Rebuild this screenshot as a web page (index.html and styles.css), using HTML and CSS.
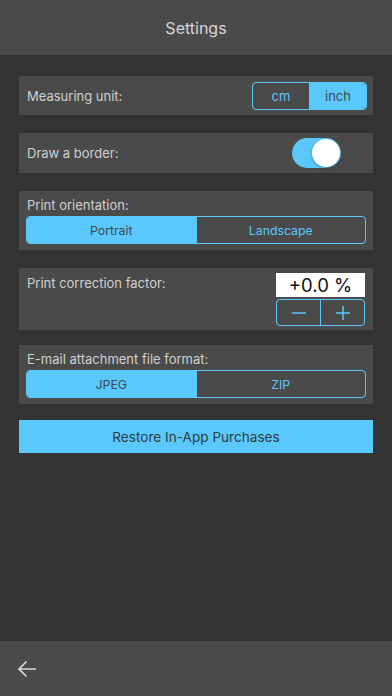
FILE: index.html
```html
<!DOCTYPE html>
<html>
<head>
<meta charset="utf-8">
<link rel="stylesheet" href="styles.css">
</head>
<body>
<div class="app">
  <header class="topbar">Settings</header>
  <main class="content">
    <section class="card row">
      <span class="label">Measuring unit:</span>
      <div class="seg seg-small">
        <span class="seg-item">cm</span>
        <span class="seg-item on">inch</span>
      </div>
    </section>
    <section class="card row card-border">
      <span class="label">Draw a border:</span>
      <div class="toggle"><span class="knob"></span></div>
    </section>
    <section class="card stack">
      <span class="label">Print orientation:</span>
      <div class="seg seg-wide">
        <span class="seg-item on">Portrait</span>
        <span class="seg-item">Landscape</span>
      </div>
    </section>
    <section class="card factor">
      <span class="label">Print correction factor:</span>
      <div class="factor-ctrl">
        <div class="value">+0.0 %</div>
        <div class="stepper">
          <span class="step"><svg width="16" height="16" viewBox="0 0 16 16"><path d="M1 8h14" stroke="#5ac8fa" stroke-width="1.5"/></svg></span>
          <span class="step"><svg width="16" height="16" viewBox="0 0 16 16"><path d="M1 8h14M8 1v14" stroke="#5ac8fa" stroke-width="1.5"/></svg></span>
        </div>
      </div>
    </section>
    <section class="card stack">
      <span class="label">E-mail attachment file format:</span>
      <div class="seg seg-wide">
        <span class="seg-item on">JPEG</span>
        <span class="seg-item">ZIP</span>
      </div>
    </section>
    <button class="restore">Restore In-App Purchases</button>
  </main>
  <footer class="bottombar">
    <svg class="back" width="22" height="20" viewBox="0 0 22 20"><path d="M10.5 2.5L3 10l7.5 7.5M3 10h17" fill="none" stroke="#d8d8d8" stroke-width="1.7"/></svg>
  </footer>
</div>
</body>
</html>
```
FILE: styles.css
```css
* { box-sizing: border-box; }
html, body { margin: 0; padding: 0; }
body {
  background: #333333;
  font-family: Inter, "Noto Sans", sans-serif;
  color: #d2d2d2;
}
.app {
  width: 392px;
  height: 696px;
  display: flex;
  flex-direction: column;
}
.topbar {
  height: 55px;
  background: #4a4a4a;
  display: flex;
  align-items: center;
  justify-content: center;
  font-size: 16px;
  color: #d6d6d6;
  padding-top: 1px;
}
.content {
  flex: 1;
  padding: 21px 19px 0;
  display: flex;
  flex-direction: column;
}
.card {
  background: #4a4a4a;
  margin-bottom: 18px;
}
.label {
  font-size: 13px;
  color: #d0d0d0;
}
.row {
  height: 39px;
  display: flex;
  align-items: center;
  justify-content: space-between;
  padding: 0 6px 0 8px;
}
.card-border { height: 40px; padding-right: 32px; }
.stack {
  height: 59px;
  padding: 6px 7px 0 7px;
  display: flex;
  flex-direction: column;
}
.stack .label { padding-left: 1px; height: 19px; }
.seg {
  display: flex;
  border: 1px solid #5ac8fa;
  border-radius: 4px;
  overflow: hidden;
  height: 28px;
}
.seg-item {
  flex: 1;
  display: flex;
  align-items: center;
  justify-content: center;
  color: #5ac8fa;
  font-size: 12.3px;
}
.seg-item + .seg-item { border-left: 1px solid #5ac8fa; }
.seg-item.on { background: #5ac8fa; color: #3c4a52; }
.seg-small { width: 115px; }
.seg-small .seg-item { font-size: 13px; }
.toggle {
  width: 49px;
  height: 30px;
  border-radius: 15px;
  background: #5ac8fa;
  display: flex;
  justify-content: flex-end;
  align-items: center;
  padding: 1px;
}
.knob {
  width: 28px;
  height: 28px;
  border-radius: 50%;
  background: #ffffff;
  box-shadow: 0 1px 3px rgba(0,0,0,0.35);
}
.factor {
  height: 62px;
  display: flex;
  justify-content: space-between;
  padding: 6px 8px 0 8px;
  margin-bottom: 15px;
}
.factor .label { padding-top: 1px; }
.factor-ctrl {
  display: flex;
  flex-direction: column;
  gap: 2px;
  margin-top: -1px;
}
.value {
  width: 89px;
  height: 24px;
  background: #ffffff;
  color: #111;
  font-size: 18.5px;
  display: flex;
  align-items: center;
  justify-content: center;
}
.stepper {
  width: 89px;
  height: 27px;
  border: 1px solid #5ac8fa;
  border-radius: 4px;
  display: flex;
}
.step {
  flex: 1;
  display: flex;
  align-items: center;
  justify-content: center;
}
.step + .step { border-left: 1px solid #5ac8fa; }
.restore {
  height: 33px;
  border: none;
  background: #5ac8fa;
  color: #2e3b42;
  font-family: inherit;
  font-size: 13.6px;
  margin-top: -2px;
  padding: 0;
}
.bottombar {
  height: 55px;
  background: #4a4a4a;
  display: flex;
  align-items: center;
  padding-left: 16px;
  padding-top: 1px;
}
```
